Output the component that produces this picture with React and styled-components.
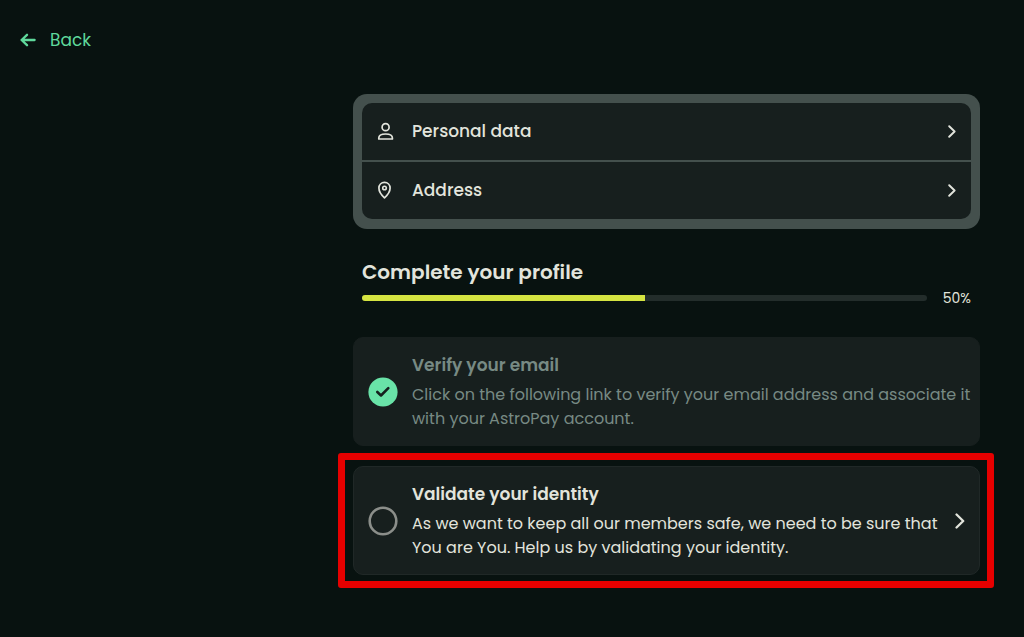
import React from "react";
import styled, { createGlobalStyle } from "styled-components";

const personalLinks = [
  { id: "personal", label: "Personal data", icon: "person" },
  { id: "address", label: "Address", icon: "pin" },
];

const progress = 50;

const ArrowIcon = () => (
  <svg width="16" height="14" viewBox="0 0 16 14" fill="none" aria-hidden="true">
    <path
      d="M7 1.8L1.6 7L7 12.2M1.6 7H14.6"
      stroke="currentColor"
      strokeWidth="2.3"
      strokeLinecap="round"
      strokeLinejoin="round"
    />
  </svg>
);

const PersonIcon = () => (
  <svg width="18" height="20" viewBox="0 0 18 20" fill="none" aria-hidden="true">
    <circle cx="8.6" cy="6.2" r="3.5" stroke="currentColor" strokeWidth="1.7" />
    <path
      d="M1.8 18V17C1.8 14.6 4.6 13 8.6 13S15.4 14.6 15.4 17V18Z"
      stroke="currentColor"
      strokeWidth="1.7"
      strokeLinejoin="round"
    />
  </svg>
);

const PinIcon = () => (
  <svg width="18" height="20" viewBox="0 0 18 20" fill="none" aria-hidden="true">
    <path
      d="M7.5 17.8C7.5 17.8 1.9 12.8 1.9 8C1.9 4.8 4.3 2.4 7.5 2.4S13.1 4.8 13.1 8C13.1 12.8 7.5 17.8 7.5 17.8Z"
      stroke="currentColor"
      strokeWidth="1.7"
      strokeLinejoin="round"
    />
    <circle cx="7.5" cy="8" r="1.8" stroke="currentColor" strokeWidth="1.6" />
  </svg>
);

const Chevron = ({ large }) => (
  <svg
    width={large ? 10 : 8}
    height={large ? 16 : 13}
    viewBox="0 0 8 13"
    fill="none"
    aria-hidden="true"
  >
    <path
      d="M1.2 1.2L6.6 6.5L1.2 11.8"
      stroke="currentColor"
      strokeWidth="1.9"
      strokeLinecap="round"
      strokeLinejoin="round"
    />
  </svg>
);

const DoneIcon = () => (
  <svg width="30" height="30" viewBox="0 0 30 30" fill="none" aria-hidden="true">
    <circle cx="15" cy="15" r="14.6" fill="#69e3a8" />
    <path
      d="M9.3 15L13 18.5L20.3 11.2"
      stroke="#15201e"
      strokeWidth="2.6"
      strokeLinecap="round"
      strokeLinejoin="round"
    />
  </svg>
);

const PendingIcon = () => (
  <svg width="30" height="30" viewBox="0 0 30 30" fill="none" aria-hidden="true">
    <circle cx="15" cy="15" r="13.3" stroke="#8b8e8a" strokeWidth="2.6" />
  </svg>
);

const App = () => (
  <Page>
    <GlobalStyle />
    <Side>
      <BackButton type="button">
        <ArrowIcon />
        Back
      </BackButton>
    </Side>
    <Main>
      <LinkCard>
        {personalLinks.map(({ id, label, icon }) => (
          <LinkRow key={id} href={`#${id}`}>
            {icon === "person" ? <PersonIcon /> : <PinIcon />}
            <LinkLabel>{label}</LinkLabel>
            <Chevron />
          </LinkRow>
        ))}
      </LinkCard>

      <ProfileProgress>
        <Heading id="profile-heading">Complete your profile</Heading>
        <ProgressLine>
          <Track
            role="progressbar"
            aria-labelledby="profile-heading"
            aria-valuenow={progress}
          >
            <Fill style={{ width: `${progress}%` }} />
          </Track>
          <Percent>{progress}%</Percent>
        </ProgressLine>
      </ProfileProgress>

      <StepCard $done>
        <DoneIcon />
        <StepBody>
          <StepTitle>Verify your email</StepTitle>
          <StepText>
            Click on the following link to verify your email address and
            associate it with your AstroPay account.
          </StepText>
        </StepBody>
      </StepCard>

      <Highlight>
        <StepCard as="a" href="#identity">
          <PendingIcon />
          <StepBody>
            <StepTitle>Validate your identity</StepTitle>
            <StepText>
              As we want to keep all our members safe, we need to be sure that
              You are You. Help us by validating your identity.
            </StepText>
          </StepBody>
          <Chevron large />
        </StepCard>
      </Highlight>
    </Main>
  </Page>
);

export default App;

const GlobalStyle = createGlobalStyle`
  * {
    box-sizing: border-box;
  }

  body {
    margin: 0;
    background: #081210;
    color: #e2e4dc;
    font-family: Poppins, Inter, sans-serif;
  }

  svg {
    flex-shrink: 0;
  }
`;

const Page = styled.div`
  display: grid;
  grid-template-columns: 353px minmax(0, 1fr);
  min-height: 100vh;
`;

const Side = styled.div`
  padding: 28px 20px;
`;

const BackButton = styled.button`
  display: flex;
  align-items: center;
  gap: 14px;
  padding: 0;
  border: 0;
  background: none;
  color: #5fd99c;
  font-family: inherit;
  font-size: 17px;
  line-height: 24px;
  cursor: pointer;
`;

const Main = styled.main`
  padding: 94px 44px 40px 0;
`;

const LinkCard = styled.nav`
  display: flex;
  flex-direction: column;
  gap: 2px;
  padding: 9px 9px 10px;
  border-radius: 14px;
  background: #44504d;
`;

const LinkRow = styled.a`
  display: flex;
  align-items: center;
  height: 57px;
  padding: 0 15px 1px;
  background: #171f1e;
  color: inherit;
  text-decoration: none;

  &:first-child {
    border-radius: 10px 10px 0 0;
  }

  &:last-child {
    border-radius: 0 0 10px 10px;
  }
`;

const LinkLabel = styled.span`
  flex: 1;
  margin-left: 17px;
  font-size: 17px;
  font-weight: 500;
  line-height: 24px;
`;

const ProfileProgress = styled.section`
  padding: 31px 9px 29px;
`;

const Heading = styled.h2`
  margin: 0;
  font-size: 20px;
  font-weight: 600;
  line-height: 24px;
`;

const ProgressLine = styled.div`
  display: flex;
  align-items: center;
  gap: 14px;
  margin-top: 4px;
`;

const Track = styled.div`
  flex: 1;
  height: 6px;
  border-radius: 3px;
  background: #232d2b;
  overflow: hidden;
`;

const Fill = styled.div`
  height: 100%;
  background: #d5e441;
`;

const Percent = styled.span`
  width: 30px;
  font-size: 14px;
  line-height: 20px;
  text-align: right;
`;

const StepCard = styled.section`
  display: flex;
  align-items: center;
  gap: 14px;
  padding: 15px ${({ $done }) => ($done ? "6px" : "14px")} 14px 14px;
  border: 1px solid ${({ $done }) => ($done ? "#171f1e" : "#202827")};
  border-radius: 10px;
  background: #171f1e;
  color: ${({ $done }) => ($done ? "#778a84" : "#e2e4dc")};
  text-decoration: none;
`;

const StepBody = styled.div`
  flex: 1;
`;

const StepTitle = styled.h3`
  margin: 0;
  font-size: 17px;
  font-weight: 600;
  line-height: 24px;
`;

const StepText = styled.p`
  margin: 6px 0 0;
  font-size: 16px;
  line-height: 24px;
`;

const Highlight = styled.div`
  margin: 7px -14px 0 -15px;
  padding: 6px 7px 6px 8px;
  border: 7px solid #e60000;
  border-radius: 3px;
`;
